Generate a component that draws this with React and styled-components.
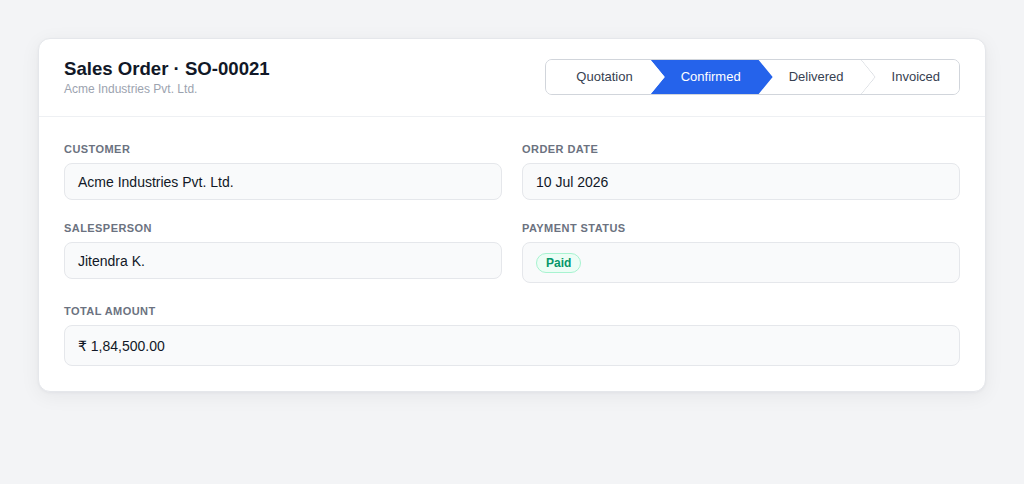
import React from "react";
import styled, { createGlobalStyle } from "styled-components";

const Global = createGlobalStyle`
  html, body { margin: 0; padding: 0; background: #f3f4f6; }
  body { font-family: "Liberation Sans", Arial, "DejaVu Sans", sans-serif; color: #111827; }
  * { box-sizing: border-box; }
`;

const Page = styled.div`
  padding: 38px;
  min-height: 484px;
  background: #f3f4f6;
`;

const Card = styled.div`
  background: #ffffff;
  border: 1px solid #e5e7eb;
  border-radius: 12px;
  box-shadow: 0 4px 20px rgba(17, 24, 39, 0.06), 0 1px 3px rgba(17, 24, 39, 0.04);
`;

const Header = styled.div`
  display: flex;
  align-items: center;
  justify-content: space-between;
  padding: 18px 25px 19px;
  border-bottom: 1px solid #eef0f3;
`;

const TitleBlock = styled.div`
  display: flex;
  flex-direction: column;
`;

const Title = styled.h1`
  margin: 0;
  font-size: 18.6px;
  line-height: 24px;
  font-weight: 700;
  color: #111827;
`;

const Subtitle = styled.div`
  font-size: 12px;
  line-height: 16px;
  color: #9ca3af;
`;

const Stepper = styled.div`
  display: flex;
  border: 1px solid #d1d5db;
  border-radius: 7px;
  overflow: hidden;
  background: #fff;
`;

const ARROW = 14;

const Step = styled.div`
  position: relative;
  height: 34px;
  line-height: 34px;
  font-size: 13px;
  white-space: nowrap;
  padding: 0 ${(p) => (p.$last ? 19 : 32)}px 0 30px;
  margin-left: ${(p) => (p.$first ? 0 : -ARROW)}px;
  z-index: ${(p) => p.$z};
  background: ${(p) => (p.$active ? "#2563eb" : "#ffffff")};
  color: ${(p) => (p.$active ? "#ffffff" : "#374151")};
  clip-path: ${(p) => {
    const notch = p.$first ? "0 50%" : `${ARROW}px 50%`;
    if (p.$last) return `polygon(0 0, 100% 0, 100% 100%, 0 100%, ${notch})`;
    return `polygon(0 0, calc(100% - ${ARROW}px) 0, 100% 50%, calc(100% - ${ARROW}px) 100%, 0 100%, ${notch})`;
  }};
`;

const Divider = styled.svg`
  position: absolute;
  top: 0;
  right: 0;
  width: ${ARROW + 1}px;
  height: 34px;
  pointer-events: none;
`;

const Body = styled.div`
  display: grid;
  grid-template-columns: 1fr 1fr;
  column-gap: 20px;
  row-gap: 20px;
  padding: 24px 25px 25px;
`;

const Field = styled.div`
  display: flex;
  flex-direction: column;
  gap: 6px;
  grid-column: ${(p) => (p.$full ? "1 / -1" : "auto")};
`;

const Label = styled.div`
  font-size: 11px;
  line-height: 16px;
  font-weight: 700;
  letter-spacing: 0.04em;
  text-transform: uppercase;
  color: #6b7280;
`;

const Value = styled.div`
  display: flex;
  align-items: center;
  height: ${(p) => p.$h || 37}px;
  padding: 0 13px;
  background: #f9fafb;
  border: 1px solid #e5e7eb;
  border-radius: 8px;
  font-size: 14px;
  color: #111827;
`;

const Badge = styled.span`
  display: inline-flex;
  align-items: center;
  height: 20px;
  padding: 0 9px;
  border-radius: 999px;
  background: #ecfdf5;
  border: 1px solid #a7f3d0;
  color: #059669;
  font-size: 12px;
  font-weight: 700;
`;

const steps = ["Quotation", "Confirmed", "Delivered", "Invoiced"];
const activeIndex = 1;

export default function App() {
  return (
    <>
      <Global />
      <Page>
        <Card>
          <Header>
            <TitleBlock>
              <Title>Sales Order · SO-00021</Title>
              <Subtitle>Acme Industries Pvt. Ltd.</Subtitle>
            </TitleBlock>
            <Stepper>
              {steps.map((s, i) => {
                const last = i === steps.length - 1;
                const showDivider =
                  !last && i !== activeIndex && i + 1 !== activeIndex;
                return (
                  <Step
                    key={s}
                    $first={i === 0}
                    $last={last}
                    $active={i === activeIndex}
                    $z={steps.length - i}
                  >
                    {s}
                    {showDivider && (
                      <Divider viewBox="0 0 15 34">
                        <polyline
                          points="0.5,0 14.3,17 0.5,34"
                          fill="none"
                          stroke="#d1d5db"
                          strokeWidth="1"
                        />
                      </Divider>
                    )}
                  </Step>
                );
              })}
            </Stepper>
          </Header>
          <Body>
            <Field>
              <Label>Customer</Label>
              <Value>Acme Industries Pvt. Ltd.</Value>
            </Field>
            <Field>
              <Label>Order Date</Label>
              <Value>10 Jul 2026</Value>
            </Field>
            <Field>
              <Label>Salesperson</Label>
              <Value>Jitendra K.</Value>
            </Field>
            <Field>
              <Label>Payment Status</Label>
              <Value $h={41}>
                <Badge>Paid</Badge>
              </Value>
            </Field>
            <Field $full>
              <Label>Total Amount</Label>
              <Value $h={41}>₹ 1,84,500.00</Value>
            </Field>
          </Body>
        </Card>
      </Page>
    </>
  );
}
